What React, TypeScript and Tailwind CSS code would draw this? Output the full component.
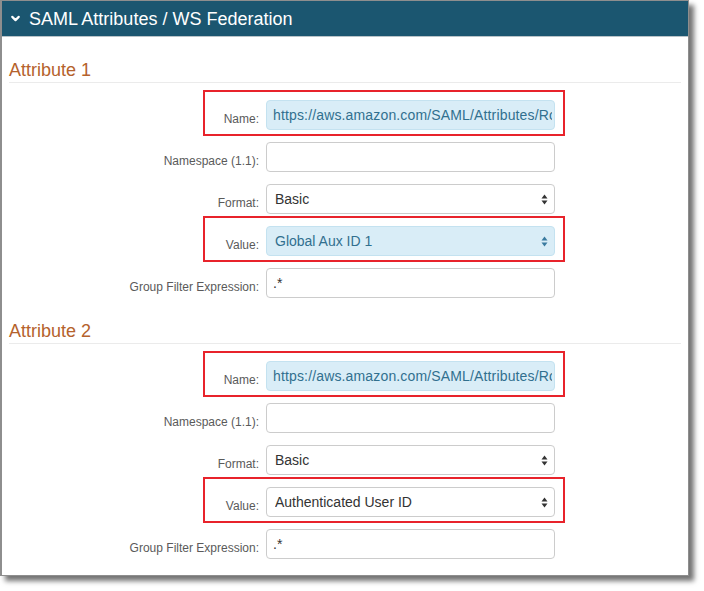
import { ChevronDown } from 'lucide-react'

/**
 * SAML attribute mapping panel — two attribute blocks, with the Name / Value
 * rows called out by red annotation boxes.
 */

type Row = {
  label: string
  value: string
  kind: 'input' | 'select'
  highlight?: boolean
  boxed?: boolean
}

const ATTRIBUTES: { title: string; rows: Row[] }[] = [
  {
    title: 'Attribute 1',
    rows: [
      { label: 'Name:', value: 'https://aws.amazon.com/SAML/Attributes/RoleSessionName', kind: 'input', highlight: true },
      { label: 'Namespace (1.1):', value: '', kind: 'input' },
      { label: 'Format:', value: 'Basic', kind: 'select' },
      { label: 'Value:', value: 'Global Aux ID 1', kind: 'select', highlight: true },
      { label: 'Group Filter Expression:', value: '.*', kind: 'input' },
    ],
  },
  {
    title: 'Attribute 2',
    rows: [
      { label: 'Name:', value: 'https://aws.amazon.com/SAML/Attributes/Role', kind: 'input', highlight: true },
      { label: 'Namespace (1.1):', value: '', kind: 'input' },
      { label: 'Format:', value: 'Basic', kind: 'select' },
      { label: 'Value:', value: 'Authenticated User ID', kind: 'select', boxed: true },
      { label: 'Group Filter Expression:', value: '.*', kind: 'input' },
    ],
  },
]

function SelectArrows({ tint }: { tint: string }) {
  return (
    <svg width="7" height="11" viewBox="0 0 7 11" className="shrink-0">
      <path d="M3.5 0.5 L6.5 4.5 L0.5 4.5 Z" fill={tint} />
      <path d="M3.5 10.5 L6.5 6.5 L0.5 6.5 Z" fill={tint} />
    </svg>
  )
}

function Control({ row }: { row: Row }) {
  const hl = row.highlight
  const base = hl
    ? 'bg-[#d9edf7] border-[#c4e2f0] text-[#31708f]'
    : 'bg-white border-[#cccccc] text-[#333333]'

  if (row.kind === 'select') {
    return (
      <div className={`w-[289px] h-[30px] border rounded-[4px] flex items-center pl-[8px] pr-[6px] text-[14px] ${base}`}>
        <span className="flex-1 whitespace-nowrap overflow-hidden">{row.value}</span>
        <SelectArrows tint={hl ? '#3a7ba0' : '#333333'} />
      </div>
    )
  }

  return (
    <div className={`w-[289px] h-[30px] border rounded-[4px] flex items-center pl-[6px] pr-[2px] text-[14px] tracking-[0.15px] overflow-hidden ${base}`}>
      <span className="whitespace-nowrap overflow-hidden">{row.value}</span>
    </div>
  )
}

export default function App() {
  return (
    <div className="w-[704px] h-[591px] bg-white" style={{ fontFamily: '"Liberation Sans", Arial, sans-serif' }}>
      <div className="w-[689px] h-[576px] border border-l-2 border-[#8e8e8e] bg-white shadow-[5px_5px_5px_rgba(0,0,0,0.55)] flex flex-col">
        {/* Header */}
        <div className="h-[36px] shrink-0 bg-[#1b5670] border-b border-[#b9c3c8] flex items-center pl-[7px] gap-[7px] text-white">
          <ChevronDown size={13} strokeWidth={4} />
          <span className="text-[18px] leading-[22px]">SAML Attributes / WS Federation</span>
        </div>

        <div className="pl-[7px] pr-[7px]">
          {ATTRIBUTES.map(attr => (
            <div key={attr.title} className="mt-[22px]">
              <div className="text-[18px] leading-[22px] pb-[1px] border-b border-[#ebebeb] text-[#b5622c]">
                {attr.title}
              </div>

              <div className="mt-[17px] flex flex-col gap-[12px]">
                {attr.rows.map(row => (
                  <div key={row.label} className="relative flex items-start">
                    <div className="w-[250px] shrink-0 text-right text-[12px] leading-4 pt-[11px] text-[#5a5a5a]">
                      {row.label}
                    </div>
                    <div className="ml-[7px]">
                      <Control row={row} />
                    </div>
                    {(row.highlight || row.boxed) && (
                      <div className="absolute left-[194px] -top-[10px] w-[362px] h-[46px] border-2 border-[#e8232b] pointer-events-none" />
                    )}
                  </div>
                ))}
              </div>
            </div>
          ))}
        </div>
      </div>
    </div>
  )
}
